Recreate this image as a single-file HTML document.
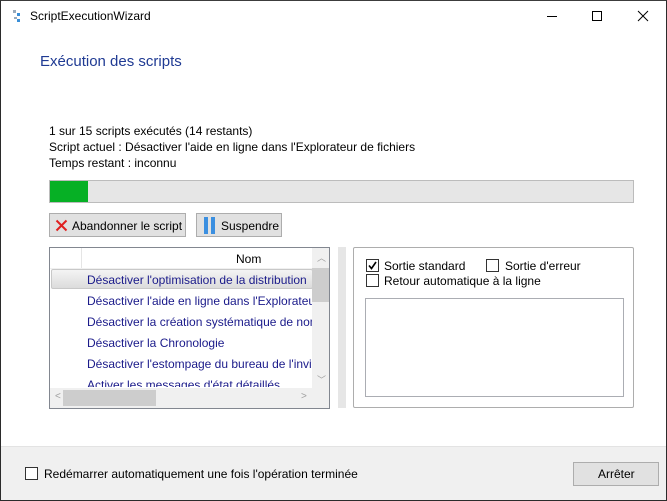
<!DOCTYPE html>
<html><head><meta charset="utf-8"><style>
*{margin:0;padding:0;box-sizing:border-box}
body{width:667px;height:501px;background:#fff;position:relative;overflow:hidden;font-family:"Liberation Sans",sans-serif;font-size:12px;color:#000}
.a{position:absolute;white-space:nowrap}
.win{position:absolute;left:0;top:0;width:667px;height:501px;border:1px solid #2b2b2b;border-top:1px solid #3c3c3c}
.btn{position:absolute;background:#e1e1e1;border:1px solid #adadad}
.cb{position:absolute;width:13px;height:13px;border:1px solid #333;background:#fff}
.row{position:absolute;white-space:nowrap;color:#1a1a8a;font-size:12px}
</style></head><body>
<div class="win"></div>
<svg class="a" style="left:12px;top:9px" width="10" height="14"><rect x="1" y="1" width="3" height="3" fill="#9ab"/><rect x="5" y="4" width="3" height="3" fill="#3a8fd8"/><rect x="2" y="8" width="3" height="2" fill="#9ab"/><rect x="5" y="10" width="3" height="3" fill="#3a8fd8"/></svg>
<div class="a" style="left:30px;top:9px;font-size:12px">ScriptExecutionWizard</div>
<div class="a" style="left:547px;top:16px;width:10px;height:1px;background:#000"></div>
<div class="a" style="left:592px;top:11px;width:10px;height:10px;border:1px solid #000"></div>
<svg class="a" style="left:637px;top:10px" width="12" height="12"><path d="M1 1L11 11M11 1L1 11" stroke="#000" stroke-width="1"/></svg>
<div class="a" style="left:40px;top:53px;font-size:15px;color:#1f3a93">Exécution des scripts</div>
<div class="a" style="left:49px;top:124px">1 sur 15 scripts exécutés (14 restants)</div>
<div class="a" style="left:49px;top:140px">Script actuel : Désactiver l'aide en ligne dans l'Explorateur de fichiers</div>
<div class="a" style="left:49px;top:156px">Temps restant : inconnu</div>
<div class="a" style="left:49px;top:180px;width:585px;height:23px;background:#e6e6e6;border:1px solid #bcbcbc"></div>
<div class="a" style="left:50px;top:181px;width:38px;height:21px;background:#06b025"></div>
<div class="btn" style="left:49px;top:213px;width:137px;height:24px"></div>
<svg class="a" style="left:55px;top:219px" width="13" height="13"><path d="M1.5 1.5L11.5 11.5M11.5 1.5L1.5 11.5" stroke="#e02020" stroke-width="2"/></svg>
<div class="a" style="left:72px;top:219px">Abandonner le script</div>
<div class="btn" style="left:196px;top:213px;width:86px;height:24px"></div>
<div class="a" style="left:204px;top:217px;width:4px;height:17px;background:#3b8fe0"></div>
<div class="a" style="left:211px;top:217px;width:4px;height:17px;background:#3b8fe0"></div>
<div class="a" style="left:221px;top:219px">Suspendre</div>
<div class="a" style="left:49px;top:247px;width:281px;height:162px;border:1px solid #828790;background:#fff;overflow:hidden">
<div class="a" style="left:31px;top:0;width:1px;height:20px;background:#e5e5e5"></div>
<div class="a" style="left:0;top:20px;width:262px;height:1px;background:#f0f0f0"></div>
<div class="a" style="left:186px;top:4px">Nom</div>
<div class="a" style="left:1px;top:21px;width:262px;height:20px;background:linear-gradient(#f4f4f4,#dcdcdc);border:1px solid #c8c8c8;border-radius:2px"></div>
<div class="a" style="left:262px;top:0;width:17px;height:140px;background:#f0f0f0"></div>
<div class="a" style="left:262px;top:20px;width:17px;height:34px;background:#cdcdcd"></div>
<div class="a" style="left:0;top:140px;width:262px;height:20px;background:#f0f0f0"></div>
<div class="a" style="left:13px;top:142px;width:93px;height:16px;background:#cdcdcd"></div>
<div class="a" style="left:262px;top:140px;width:17px;height:20px;background:#f0f0f0"></div>
<div class="a" style="left:267px;top:3px;color:#a0a0a0;font-size:9px">︿</div>
<div class="a" style="left:267px;top:125px;color:#a0a0a0;font-size:9px">﹀</div>
<div class="a" style="left:5px;top:143px;color:#a0a0a0;font-size:10px">&lt;</div>
<div class="a" style="left:251px;top:143px;color:#a0a0a0;font-size:10px">&gt;</div>
</div>
<div style="position:absolute;left:49px;top:247px;width:263px;height:140px;overflow:hidden">
<div class="row" style="left:38px;top:26px">Désactiver l'optimisation de la distribution</div>
<div class="row" style="left:38px;top:47px">Désactiver l'aide en ligne dans l'Explorateur</div>
<div class="row" style="left:38px;top:68px">Désactiver la création systématique de noms</div>
<div class="row" style="left:38px;top:89px">Désactiver la Chronologie</div>
<div class="row" style="left:38px;top:110px">Désactiver l'estompage du bureau de l'invite</div>
<div class="row" style="left:38px;top:131px">Activer les messages d'état détaillés</div>
</div>
<div class="a" style="left:338px;top:247px;width:8px;height:161px;background:#e6e6e6"></div>
<div class="a" style="left:353px;top:247px;width:281px;height:161px;border:1px solid #adadad;border-radius:2px"></div>
<div class="cb" style="left:366px;top:259px"></div>
<svg class="a" style="left:367px;top:260px" width="11" height="11"><path d="M2 5.5L4.5 8.5L9 2" stroke="#000" stroke-width="1.6" fill="none"/></svg>
<div class="a" style="left:384px;top:259px">Sortie standard</div>
<div class="cb" style="left:486px;top:259px"></div>
<div class="a" style="left:505px;top:259px">Sortie d'erreur</div>
<div class="cb" style="left:366px;top:274px"></div>
<div class="a" style="left:384px;top:274px">Retour automatique à la ligne</div>
<div class="a" style="left:365px;top:298px;width:259px;height:99px;border:1px solid #abadb3"></div>
<div class="a" style="left:1px;top:446px;width:665px;height:54px;background:#f0f0f0;border-top:1px solid #e3e3e3"></div>
<div class="cb" style="left:25px;top:467px"></div>
<div class="a" style="left:44px;top:467px">Redémarrer automatiquement une fois l'opération terminée</div>
<div class="btn" style="left:573px;top:462px;width:86px;height:24px"></div>
<div class="a" style="left:598px;top:467px">Arrêter</div>
</body></html>
